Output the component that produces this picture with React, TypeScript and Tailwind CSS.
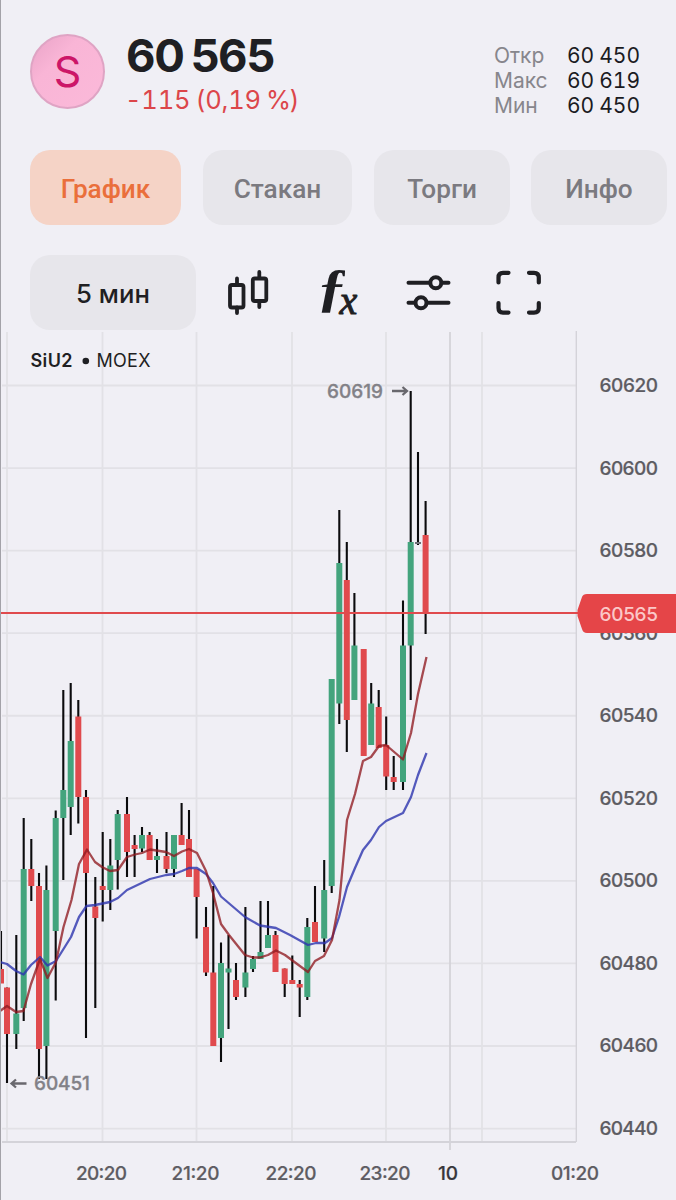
import React from "react";

const GREEN = "#43a47d";
const RED = "#e04a4d";

// x, high, low, body top, body bottom, up/down/flat
type Candle = [number, number, number, number, number, "u" | "d" | "f"];

const candles: Candle[] = [
  [1, 931, 969, 969, 983.5, "d"],
  [7, 987.5, 1083, 987.5, 1034, "d"],
  [16.3, 935, 1049, 1013.5, 1034, "u"],
  [23.7, 818, 1021, 869, 1008, "u"],
  [31.3, 839, 901, 869, 886, "d"],
  [39, 873, 1079, 886, 1049, "d"],
  [46.4, 865.5, 1079, 890, 1046, "u"],
  [55.7, 810.5, 1000.5, 818, 931, "u"],
  [63.3, 690, 880, 790, 818, "u"],
  [70.7, 683, 835, 741, 807, "u"],
  [78.3, 700, 823.5, 716.5, 797, "d"],
  [86, 790, 1038, 797, 873, "d"],
  [95.3, 877, 1008, 906.5, 918, "d"],
  [102.7, 832, 921.5, 886, 890, "d"],
  [110.3, 839, 910, 865.5, 890, "u"],
  [117.7, 810, 889.5, 814, 860, "u"],
  [127, 797, 877, 814, 852, "d"],
  [134.6, 835, 877, 845, 849, "d"],
  [142, 827, 852, 835, 848.5, "u"],
  [149.6, 832, 860, 835, 860, "d"],
  [157, 839, 873, 856, 860, "u"],
  [166.5, 832, 873, 856, 869, "d"],
  [174, 835, 877, 835, 869, "u"],
  [181.6, 803, 845, 835, 845, "d"],
  [189, 810, 877, 839, 877, "d"],
  [196.6, 869, 938.5, 869, 897, "d"],
  [206, 907, 976, 927, 972.5, "d"],
  [213.3, 886, 1046, 972.5, 1046, "d"],
  [221, 942.5, 1062, 963, 1038, "u"],
  [228.5, 935, 1029, 968.5, 972.5, "u"],
  [236, 963, 1000, 980, 997, "d"],
  [245.4, 907, 997, 972.5, 987.5, "u"],
  [253, 956, 972, 959, 969, "u"],
  [260.5, 901, 959, 952, 959, "u"],
  [268, 901, 948, 935, 948, "u"],
  [275.5, 931, 972, 935, 972, "d"],
  [284.7, 968.5, 997, 968.5, 984, "d"],
  [292.3, 955.5, 984, 980, 984, "d"],
  [299.7, 980, 1017, 984, 987.5, "d"],
  [307.3, 918, 1000, 927, 997, "u"],
  [315, 886, 942, 922, 942, "d"],
  [324.2, 860, 952, 890, 938.5, "u"],
  [331.7, 679, 893, 679, 886, "u"],
  [339.3, 510, 724, 563, 703.5, "u"],
  [346.8, 542, 752, 580, 720, "d"],
  [354.4, 593, 700, 645.5, 700, "u"],
  [363.7, 649, 756, 649, 756, "d"],
  [371.2, 683, 745, 703.5, 745, "u"],
  [378.7, 690, 748, 707, 748, "d"],
  [386.2, 716.5, 790, 745, 776.5, "d"],
  [393.7, 756, 790, 777, 782, "d"],
  [403, 600.5, 790, 645.5, 782, "u"],
  [410.7, 391, 700, 542, 645.5, "u"],
  [418, 452, 545, 542, 544, "f"],
  [425.6, 501, 634, 535, 613, "d"],
];

const fastMa =
  "0,1011 7,1006 16,1012 23.5,1011 31,984 40,959 47.5,978 56,962 63.5,927 71.5,900 79,864 87,849.5 95,862 102,867 110,871 118,870 127,857 135,854.5 142,853 150,849.5 166,852 174,856 182,851.5 189,849 197,853 206,871 213,893 221,924 229,935 245,955 253,957.5 260,957.5 268,955 276,950.5 285,955 308,972 315,961 324,956 332,940 339.5,900 347,820 355,794 363,761 371,757 379,746 386,745 403,759.5 411,733 418,694 426.5,657";
const slowMa =
  "0,962 7,964 16,971 23.5,974.5 31,965 40,957 47.5,965.5 56,961 71,937 79,917 86.5,906 95,905 110,902 118,898 127,890 150,879 166,875 174,874 182,871 189,868 197,868 206,874 213,883 221,896.5 245,917 260,925.5 276,928 290,935 308,945 316,943 325,943 332,938 339,917 347,887 355,868 363,850 371,840 379,827 386,821 403,813 411,797 418,775 426.5,753";

const prices = [60620, 60600, 60580, 60560, 60540, 60520, 60500, 60480, 60460, 60440];
const priceY = (p: number) => 385.5 + (60620 - p) * 4.128;

const gridX = [7, 102.5, 196.5, 292, 386, 482];

const times = [
  { label: "20:20", x: 101.5, w: 51 },
  { label: "21:20", x: 195.5, w: 48 },
  { label: "22:20", x: 291, w: 51 },
  { label: "23:20", x: 385, w: 51 },
  { label: "10", x: 448, w: 20, dark: true },
  { label: "01:20", x: 575, w: 48 },
];

const tabs = [
  { label: "График", box: "w-[151px] mr-[22px] bg-[#f5d3c6] text-[#ea6f3b]" },
  { label: "Стакан", box: "w-[149px] mr-[22px] bg-[#e7e6eb] text-[#7b7a80]" },
  { label: "Торги", box: "w-[136px] mr-[21px] bg-[#e7e6eb] text-[#7b7a80]" },
  { label: "Инфо", box: "w-[136px] bg-[#e7e6eb] text-[#7b7a80]" },
];

const stats = [
  ["Откр", "60", "450"],
  ["Макс", "60", "619"],
  ["Мин", "60", "450"],
];

const Header = () => (
  <header className="flex h-[150px] pl-[30px] pr-[36px]">
    <div className="mt-[34px] flex size-[75px] shrink-0 items-center justify-center rounded-full border-2 border-[#dfa4c4] bg-linear-to-br from-[#e9a3c7] via-[#f9b5d6] via-35% to-[#fbb9d9]">
      <span className="text-[43px] leading-none text-[#cc1668]">S</span>
    </div>
    <div className="ml-[21px] mt-[31px] whitespace-nowrap">
      <div className="flex gap-[7px] text-[45.5px] leading-[50px] font-bold tracking-[-1.4px] text-[#1f1f23]">
        <span>60</span>
        <span>565</span>
      </div>
      <div className="mt-[4px] ml-[-1px] text-[25.5px] leading-[30px] tracking-[-0.2px] [word-spacing:-1.5px] tabular-nums text-[#dc464a]">
        -115 (0,19 <span className="tracking-[-1.5px]">%)</span>
      </div>
    </div>
    <div className="mt-[43px] ml-auto flex flex-col text-[21px] leading-[25px]">
      {stats.map(([name, a, b]) => (
        <div key={name} className="flex">
          <span className="w-[73px] text-[#87868c]">{name}</span>
          <span className="flex gap-[5px] tabular-nums text-[#1b1b1f]">
            <span>{a}</span>
            <span>{b}</span>
          </span>
        </div>
      ))}
    </div>
  </header>
);

const Toolbar = () => (
  <div className="mt-[30px] flex h-[75px] items-center pl-[30px]">
    <button className="h-[75px] w-[166px] rounded-[20px] pt-[3px] bg-[#e7e6eb] text-[25.7px] font-medium text-[#1f1f23]">
      5 мин
    </button>

    {/* Candles */}
    <svg className="ml-[30px]" width="44" height="50" viewBox="226 268 44 50" fill="none" stroke="#1f1f23" strokeWidth="3.8" strokeLinecap="round">
      <rect x="230" y="285" width="13.5" height="22.5" rx="2" />
      <path d="M237 278.5V285M237 307.5V313M259.3 272V278M259.3 301V307" />
      <rect x="252.8" y="278.5" width="13.5" height="22.5" rx="2" />
    </svg>

    {/* Function */}
    <svg className="ml-[34px]" width="72" height="75" viewBox="304 255 72 75" fill="#1f1f23">
      <text
        transform="translate(317 305) scale(1.15 1)"
        fontSize="52.5"
        fontStyle="italic"
        fontWeight="700"
        fontFamily="Liberation Serif, serif"
      >
        ƒ
      </text>
      <text
        x="339.5"
        y="314.3"
        fontSize="40"
        fontStyle="italic"
        fontFamily="Liberation Serif, serif"
        stroke="#1f1f23"
        strokeWidth="1"
      >
        x
      </text>
    </svg>

    {/* Sliders */}
    <svg className="ml-[28px]" width="50" height="50" viewBox="404 268 50 50" fill="none" stroke="#1f1f23" strokeWidth="4" strokeLinecap="round">
      <path d="M408.5 282.7H429M443 282.7H448.5M408.5 302.7H414M428 302.7H448.5" />
      <circle cx="435.8" cy="282.7" r="5.5" />
      <circle cx="421" cy="302.7" r="5.5" />
    </svg>

    {/* Fullscreen */}
    <svg className="ml-[40px]" width="50" height="50" viewBox="494 268 50 50" fill="none" stroke="#1f1f23" strokeWidth="4.2" strokeLinecap="round">
      <path d="M498.5 282.5V277.5Q498.5 272.8 503 272.8H508.5M529 272.8H534Q538.8 272.8 538.8 277.5V282.5M538.8 303V308Q538.8 312.6 534 312.6H529M508.5 312.6H503Q498.5 312.6 498.5 308V303" />
    </svg>
  </div>
);

const Chart = () => (
  <svg
    className="block"
    width="676"
    height="870"
    viewBox="0 330 676 870"
    fontFamily="Inter, sans-serif"
    fontSize="19"
  >
    {/* Grid */}
    <g stroke="#e2e1e6" strokeWidth="1.8">
      {prices.map((p) => (
        <path key={p} d={`M2 ${priceY(p)}H576`} />
      ))}
      {gridX.map((x) => (
        <path key={x} d={`M${x} 332V1142`} />
      ))}
    </g>
    <g stroke="#d4d3d9" strokeWidth="1.8" fill="none">
      <path d="M450 332V1150M2 1142H576" />
      <path d="M576.3 331V1142" strokeWidth="1.4" />
    </g>
    <text x="30.5" y="366.5" fontSize="18" fontWeight="600" fill="#1f1f23" textLength="42">SiU2</text>
    <circle cx="85.8" cy="361" r="3.3" fill="#1f1f23" />
    <text x="96.5" y="366.5" fontSize="18" fill="#1f1f23" textLength="54">MOEX</text>

    {/* Candlesticks */}
    {candles.map(([x, high, low, top, bottom, dir]) => (
      <g key={x}>
        <path d={`M${x} ${high}V${low}`} stroke="#0b0b0d" strokeWidth="2.1" />
        <rect
          x={x - 3}
          y={top}
          width="6"
          height={bottom - top}
          fill={dir === "u" ? GREEN : dir === "d" ? RED : "#6e6e76"}
        />
      </g>
    ))}

    {/* Moving averages */}
    <polyline points={slowMa} fill="none" stroke="#2c33ae" strokeOpacity="0.8" strokeWidth="2.3" strokeLinejoin="round" />
    <polyline points={fastMa} fill="none" stroke="#8f1a20" strokeOpacity="0.78" strokeWidth="2.3" strokeLinejoin="round" />

    {/* High and low marks */}
    <g fill="#828187" stroke="#828187" strokeWidth="0.3" fontWeight="500">
      <text x="327" y="397.5" textLength="56">60619</text>
      <text x="34" y="1090" textLength="56">60451</text>
    </g>
    <g fill="none" stroke="#69686e" strokeWidth="2.3">
      <path d="M392 391H407M402.5 387L407 391L402.5 395" />
      <path d="M26.5 1083.5H11.5M16 1079.5L11.5 1083.5L16 1087.5" />
    </g>

    {/* Price axis */}
    <g fill="#5d5c62" stroke="#5d5c62" strokeWidth="0.2" fontWeight="500">
      {prices.map((p) => (
        <text key={p} x="599.5" y={priceY(p) + 6.5} textLength="58.5">{p}</text>
      ))}
    </g>

    {/* Current price */}
    <path d="M0 613H578" stroke="#e04a4d" strokeWidth="2" />
    <path d="M676 594H587Q583 594 582 597L577.5 610V616L582 629Q583 633 587 633H676Z" fill="#e54548" />
    <text x="599.5" y="620.5" textLength="58.5" fontWeight="500" fill="#fbc8c8">60565</text>

    {/* Time axis */}
    {times.map((t) => (
      <text
        key={t.label}
        x={t.x}
        y="1180"
        textAnchor="middle"
        textLength={t.w}
        fontWeight="500"
        fill={t.dark ? "#37363b" : "#5d5c62"}
        stroke={t.dark ? "#37363b" : "#5d5c62"}
        strokeWidth="0.2"
      >
        {t.label}
      </text>
    ))}
  </svg>
);

const App = () => {
  return (
    <div className="relative h-[1200px] w-[676px] overflow-hidden bg-[#f0eff5] font-['Inter',sans-serif]">
      <Header />
      <nav className="flex h-[75px] pl-[30px]">
        {tabs.map((tab) => (
          <button
            key={tab.label}
            className={`h-[75px] shrink-0 rounded-[20px] pt-[4px] font-['Roboto',sans-serif] text-[26.2px] font-medium ${tab.box}`}
          >
            {tab.label}
          </button>
        ))}
      </nav>
      <Toolbar />
      <Chart />
      <div className="absolute inset-y-0 left-0 w-px bg-[#a3a2a8]" />
    </div>
  );
};

export default App;
